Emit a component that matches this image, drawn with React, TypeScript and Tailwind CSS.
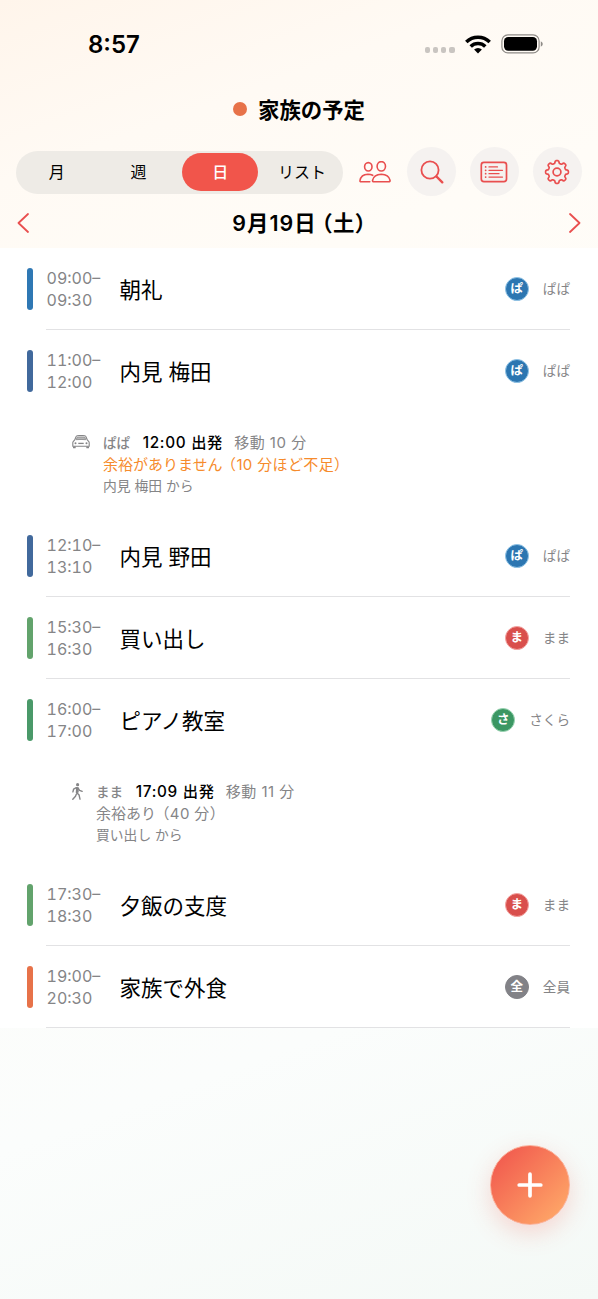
import type { ReactNode } from 'react';
import clsx from 'clsx';

type EventItem = {
  kind: 'event';
  start: string;
  end: string;
  title: string;
  bar: string;
  badge: string;
  badgeClass: string;
  who: string;
  divider: boolean;
};

type TravelItem = {
  kind: 'travel';
  icon: ReactNode;
  iconClass: string;
  who: string;
  depart: string;
  duration: string;
  note: string;
  margin: string;
  noteClass: string;
  from: string;
};

const BLUE = 'bg-[#2c76b1] border-[#8fc3e6]';
const RED = 'bg-[#d94f4c] border-[#f3a4a1]';
const GREEN = 'bg-[#3b9763] border-[#98d3b1]';
const GRAY = 'bg-[#828287] border-[#828287]';

const CarIcon = () => (
  <svg viewBox="0 0 18 14" className="h-3.5 w-[18px]" fill="none" stroke="currentColor" strokeWidth="1.1">
    <path d="M2.7 5 4 1.7Q4.3 .8 5.2.7 9 .3 12.8.7q.9.1 1.2 1L15.3 5l1.3 1.3q.6.6.6 1.5v3.5H.8V7.8q0-.9.6-1.5Z" />
    <path d="M4.2 4.7 5.2 2.2q3.8-.5 7.6 0l1 2.5Q9 4.2 4.2 4.7Z" fill="currentColor" fillOpacity=".6" strokeWidth=".8" />
    <path d="M6.3 8.4h5.4" strokeWidth="1.3" />
    <path d="M1 11.5h2.7v1.3q0 .5-.5.5H1.5q-.5 0-.5-.5ZM14.3 11.5H17v1.3q0 .5-.5.5h-1.7q-.5 0-.5-.5Z" fill="currentColor" stroke="none" />
    <circle cx="3.5" cy="8.2" r="1" fill="currentColor" stroke="none" />
    <circle cx="14.5" cy="8.2" r="1" fill="currentColor" stroke="none" />
  </svg>
);

const WalkIcon = () => (
  <svg viewBox="0 0 11 17" className="h-[17px] w-[11px]" fill="none" stroke="currentColor" strokeWidth="1.4" strokeLinecap="round" strokeLinejoin="round">
    <circle cx="5.6" cy="1.7" r="1.6" fill="currentColor" stroke="none" />
    <path d="M5.1 4.6 4.5 9.4l2.6 2.7.9 4M4.3 11.2l-.8 2.1-2.7 2.9M4.3 4.7 1.6 6.2.9 8.9M6 5l1.5 2.3 2.7 1" />
    <path d="M4.6 5h1.3l.1 4-1.4.3Z" fill="currentColor" />
  </svg>
);

const items: (EventItem | TravelItem)[] = [
  { kind: 'event', start: '09:00', end: '09:30', title: '朝礼', bar: 'bg-[#2f78b4]', badge: 'ぱ', badgeClass: BLUE, who: 'ぱぱ', divider: true },
  { kind: 'event', start: '11:00', end: '12:00', title: '内見 梅田', bar: 'bg-[#41699c]', badge: 'ぱ', badgeClass: BLUE, who: 'ぱぱ', divider: false },
  {
    kind: 'travel',
    icon: <CarIcon />,
    iconClass: 'w-[31px]',
    who: 'ぱぱ',
    depart: '12:00 出発',
    duration: '移動 10 分',
    note: '余裕がありません',
    margin: '（10 分ほど不足）',
    noteClass: 'text-[#f68b2c]',
    from: '内見 梅田 から',
  },
  { kind: 'event', start: '12:10', end: '13:10', title: '内見 野田', bar: 'bg-[#41699c]', badge: 'ぱ', badgeClass: BLUE, who: 'ぱぱ', divider: true },
  { kind: 'event', start: '15:30', end: '16:30', title: '買い出し', bar: 'bg-[#62a36c]', badge: 'ま', badgeClass: RED, who: 'まま', divider: true },
  { kind: 'event', start: '16:00', end: '17:00', title: 'ピアノ教室', bar: 'bg-[#4a9969]', badge: 'さ', badgeClass: GREEN, who: 'さくら', divider: false },
  {
    kind: 'travel',
    icon: <WalkIcon />,
    iconClass: 'w-6',
    who: 'まま',
    depart: '17:09 出発',
    duration: '移動 11 分',
    note: '余裕あり',
    margin: '（40 分）',
    noteClass: 'text-[#858587]',
    from: '買い出し から',
  },
  { kind: 'event', start: '17:30', end: '18:30', title: '夕飯の支度', bar: 'bg-[#62a36c]', badge: 'ま', badgeClass: RED, who: 'まま', divider: true },
  { kind: 'event', start: '19:00', end: '20:30', title: '家族で外食', bar: 'bg-[#e77249]', badge: '全', badgeClass: GRAY, who: '全員', divider: true },
];

// Outline of an eight-toothed wheel around (13, 13).
const gearPath =
  Array.from({ length: 144 }, (_, i) => {
    const a = (i / 144) * Math.PI * 2;
    const r = 10.1 + 1.3 * Math.tanh(2.4 * Math.cos(8 * a));
    return `${i ? 'L' : 'M'}${(13 + r * Math.sin(a)).toFixed(2)} ${(13 - r * Math.cos(a)).toFixed(2)}`;
  }).join('') + 'Z';

function StatusBar() {
  return (
    <div className="flex h-[88px] items-center justify-between pr-[54.5px] pl-[88px]">
      <span className="pt-px text-[24px] font-semibold">8:57</span>
      <div className="flex items-center">
        <div className="mt-3 flex gap-[3px]">
          {[0, 1, 2, 3].map((dot) => (
            <span key={dot} className="size-[5.2px] rounded-[2px] bg-[#c9c5c1]" />
          ))}
        </div>
        <svg viewBox="0 0 26 19" className="ml-[10px] h-[19px] w-[26px]" fill="none" stroke="#000" strokeWidth="3.5">
          <path d="M1.3 7.1a16.6 16.6 0 0 1 23.4 0" />
          <path d="M5.7 11.5a10.4 10.4 0 0 1 14.6 0" />
          <path d="m13 18.6-3.9-4a5.6 5.6 0 0 1 7.8 0Z" fill="#000" stroke="none" />
        </svg>
        <svg viewBox="0 0 43 20" className="ml-[10px] h-5 w-[43px]">
          <rect x=".9" y=".9" width="37.2" height="18" rx="6" fill="none" stroke="#8f8b87" strokeWidth="1.2" />
          <rect x="3" y="3" width="33" height="13.8" rx="4.2" fill="#000" />
          <path d="M39.8 7.3q2 .9 2 2.7t-2 2.7Z" fill="#8f8b87" />
        </svg>
      </div>
    </div>
  );
}

function RoundButton({ children }: { children: ReactNode }) {
  return <button className="flex size-[49px] items-center justify-center rounded-full bg-[#f5f2f0]">{children}</button>;
}

function Toolbar() {
  const tabs = ['月', '週', '日', 'リスト'];
  return (
    <div className="flex h-[49px] items-center pr-[16.5px] pl-4">
      <div className="mt-px flex h-[43px] w-[327px] items-center rounded-full bg-[#eeebe6]">
        {tabs.map((tab) => (
          <div
            key={tab}
            className={clsx(
              'mx-[2.9px] flex h-[38px] flex-1 items-center justify-center rounded-full text-[16px]',
              tab === '日' ? 'bg-[#f1554b] font-medium text-white' : 'text-black'
            )}
          >
            {tab}
          </div>
        ))}
      </div>
      <svg viewBox="0 0 32 22" className="ml-4 h-[22px] w-8 text-[#e94f4f]" fill="none" stroke="currentColor" strokeWidth="1.6" strokeLinejoin="round" strokeLinecap="round">
        <ellipse cx="9.3" cy="5.8" rx="3.7" ry="4.2" />
        <ellipse cx="22.3" cy="5.3" rx="4.2" ry="4.7" />
        <path d="M10.8 20.8H2.1Q.8 20.8 1 19.5 2 13.4 8.9 13.2q2.8 0 4.8 1.1" />
        <path d="M15 20.8q-1.7 0-1.4-1.6 1.3-5.8 8.7-6 7.4.2 8.7 6 .3 1.6-1.4 1.6Z" />
      </svg>
      <div className="ml-auto flex gap-[13.7px] text-[#e94f4f]">
        <RoundButton>
          <svg viewBox="0 0 24 24" className="size-6" fill="none" stroke="currentColor" strokeLinecap="round">
            <circle cx="10" cy="10" r="8.6" strokeWidth="1.8" />
            <path d="m16.5 16.5 5.8 5.8" strokeWidth="2.4" />
          </svg>
        </RoundButton>
        <RoundButton>
          <svg viewBox="0 0 28 22" className="h-[22px] w-7" fill="none" stroke="currentColor" strokeLinecap="round">
            <rect x="1.3" y="1.3" width="25.2" height="19.4" rx="2.6" strokeWidth="1.7" />
            <path d="M9 5.9h8.5M9 9.3h13.5M9 12.7h10M9 16.1h13.5" strokeWidth="1.3" />
            <path d="M5.6 5.9h.1M5.6 9.3h.1M5.6 12.7h.1M5.6 16.1h.1" strokeWidth="1.7" />
          </svg>
        </RoundButton>
        <RoundButton>
          <svg viewBox="0 0 26 26" className="size-[26px]" fill="none" stroke="currentColor" strokeWidth="1.7" strokeLinejoin="round">
            <path d={gearPath} />
            <circle cx="13" cy="13" r="3.9" />
          </svg>
        </RoundButton>
      </div>
    </div>
  );
}

function EventRow({ item }: { item: EventItem }) {
  return (
    <div className="relative flex h-[82px] items-center pr-7 pl-[27px]">
      <span className={clsx('h-[41.5px] w-[5.5px] rounded-full', item.bar)} />
      <div className="ml-[14px] w-[73px] pt-px text-[16px] leading-[21.5px] whitespace-nowrap text-[#858587] tabular-nums">
        <div>{item.start}–</div>
        <div>{item.end}</div>
      </div>
      <span className="pt-0.5 text-[21.5px]">{item.title}</span>
      <span
        className={clsx(
          'ml-auto flex size-6 items-center justify-center rounded-full border pt-px text-[12.5px] leading-none font-bold text-white',
          item.badgeClass
        )}
      >
        {item.badge}
      </span>
      <span className="ml-[14px] pt-px text-[13.6px] text-[#858587]">{item.who}</span>
      {item.divider && <span className="absolute right-7 bottom-0 left-[46px] h-px bg-[#e2e2e4]" />}
    </div>
  );
}

function TravelRow({ item }: { item: TravelItem }) {
  return (
    <div className="flex h-[103px] pt-[19px] pl-[72px] text-[#858587]">
      <div className={clsx('flex h-[22px] shrink-0 items-center', item.iconClass)}>{item.icon}</div>
      <div className="pt-px whitespace-nowrap">
        <div className="flex h-[22px] items-center text-[15px]">
          <span className="text-[13.6px] font-medium">{item.who}</span>
          <span className="ml-[12.5px] text-[15.3px] font-medium tracking-[0.7px] text-black">{item.depart}</span>
          <span className="ml-[11px] tracking-[0.5px]">{item.duration}</span>
        </div>
        <div className={clsx('flex h-[22px] items-center text-[15px] [font-feature-settings:"halt"]', item.noteClass)}>
          {item.note}
          <span className="ml-[6px] tracking-[0.35px]">{item.margin}</span>
        </div>
        <div className="flex h-[21px] items-center text-[13.8px]">{item.from}</div>
      </div>
    </div>
  );
}

export default function App() {
  return (
    <div
      lang="ja"
      className="relative flex h-[1299px] w-[598px] flex-col bg-[linear-gradient(160deg,#fff5eb_0%,#fffaf4_12%,#fffcf7_24%,#fbfdfc_76%,#f4f9f6_100%)] font-[Inter,'Noto_Sans_CJK_JP',sans-serif] text-black"
    >
      <StatusBar />
      <h1 className="flex h-[42px] items-center justify-center gap-[11px] text-[21.4px] font-bold">
        <span className="size-[14px] rounded-full bg-[#e77249]" />
        <span className="pt-0.5">家族の予定</span>
      </h1>
      <div className="mt-[17px]">
        <Toolbar />
      </div>
      <div className="flex h-[52px] items-center justify-between px-[17px] pt-px">
        <svg viewBox="0 0 12 20" className="h-5 w-3" fill="none" stroke="#e94f4f" strokeWidth="1.8" strokeLinecap="round" strokeLinejoin="round">
          <path d="M11 1 1.5 10l9.5 9" />
        </svg>
        <h2 className='flex pt-0.5 text-[21.4px] font-semibold tracking-[1.1px] [font-feature-settings:"halt"]'>
          9月19日
          <span className="ml-[5px] tracking-[0.4px]">（土）</span>
        </h2>
        <svg viewBox="0 0 12 20" className="h-5 w-3" fill="none" stroke="#e94f4f" strokeWidth="1.8" strokeLinecap="round" strokeLinejoin="round">
          <path d="m1 1 9.5 9L1 19" />
        </svg>
      </div>
      <div className="bg-white">
        {items.map((item, index) => (item.kind === 'event' ? <EventRow key={index} item={item} /> : <TravelRow key={index} item={item} />))}
      </div>
      <button className="absolute right-7 bottom-[74.5px] flex size-20 items-center justify-center rounded-full border border-[#fbb09a] bg-[linear-gradient(135deg,#f1594e_8%,#ffa868_92%)] shadow-[0_8px_24px_rgba(241,85,75,0.22)]">
        <svg viewBox="0 0 26 26" className="size-[26px]" stroke="#fff" strokeWidth="3.7" strokeLinecap="round">
          <path d="M13 2.2v21.6M2.2 13h21.6" />
        </svg>
      </button>
    </div>
  );
}
